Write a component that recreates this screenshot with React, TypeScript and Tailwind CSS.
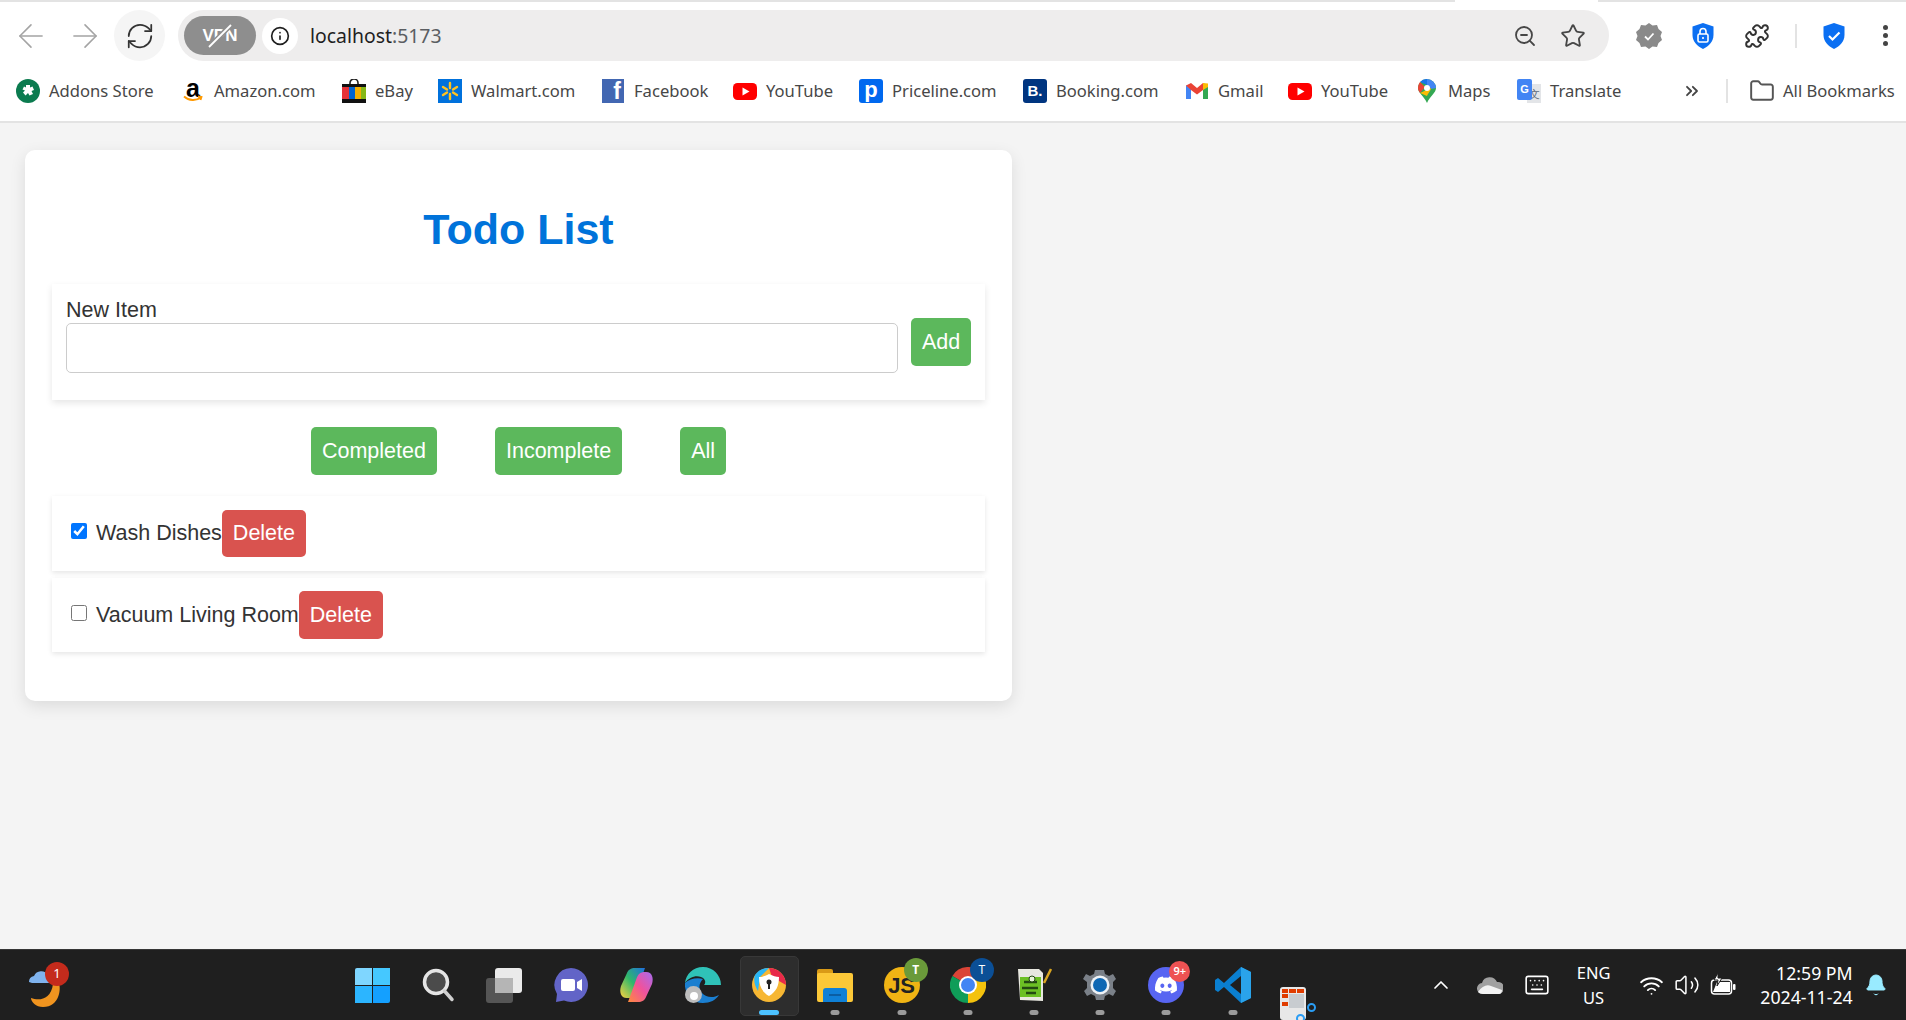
import { ArrowLeft, ArrowRight, Bell, ChevronUp, ChevronsRight, Folder, Info, Keyboard, Puzzle, RefreshCw, Star, Volume2, Wifi, ZoomOut } from 'lucide-react';
import { FaDiscord } from 'react-icons/fa';
import type { ReactNode } from 'react';

const YouTubeIcon = () => (
  <svg width="24" height="24" viewBox="0 0 24 24">
    <rect x="0" y="4" width="24" height="17" rx="4.5" fill="#f00" />
    <path d="M9.5 8.5v8l7-4z" fill="#fff" />
  </svg>
);

const Square = ({ className, children }: { className: string; children: ReactNode }) => (
  <span className={`w-6 h-6 flex items-center justify-center font-bold ${className}`}>{children}</span>
);

const bookmarks: { label: string; width: string; icon: ReactNode }[] = [
  {
    label: 'Addons Store',
    width: 'w-[165px]',
    icon: (
      <svg width="24" height="24" viewBox="0 0 24 24">
        <circle cx="12" cy="12" r="12" fill="#0b7b4f" />
        <path d="M10 6h4v2.5l2.5-1 1.5 3.5-2.5 1 1.5 3-3.5 1.5-1.5-2.5-2.5 2.5-2.500-3 2-2-2.500-1L8 7.500l2 1z" fill="#fff" />
      </svg>
    ),
  },
  {
    label: 'Amazon.com',
    width: 'w-[161px]',
    icon: (
      <span className="relative w-6 h-6 flex justify-center">
        <span className="font-['Liberation_Sans'] font-bold text-[25px] leading-[19px] text-black">a</span>
        <svg className="absolute left-[2px] bottom-0" width="20" height="8" viewBox="0 0 20 8" fill="none">
          <path d="M1 1.500c5 4.500 12 4.500 17 1M15 1.500l3.500.5-1 3" stroke="#f90" strokeWidth="1.800" />
        </svg>
      </span>
    ),
  },
  {
    label: 'eBay',
    width: 'w-[96px]',
    icon: (
      <svg width="24" height="24" viewBox="0 0 24 24">
        <path d="M8 6V4a4 4 0 0 1 8 0v2" stroke="#222" strokeWidth="1.600" fill="none" />
        <rect y="5" width="24" height="19" fill="#111" />
        <rect y="8" width="7" height="12" fill="#e53238" />
        <rect x="7" y="8" width="6" height="12" fill="#0064d2" />
        <rect x="13" y="8" width="6" height="12" fill="#f5af02" />
        <rect x="19" y="8" width="5" height="12" fill="#86b817" />
      </svg>
    ),
  },
  {
    label: 'Walmart.com',
    width: 'w-[163px]',
    icon: (
      <svg width="24" height="24" viewBox="0 0 24 24">
        <rect width="24" height="24" fill="#0071dc" />
        <g stroke="#ffc220" strokeWidth="2.400" strokeLinecap="round">
          <path d="M12 4v5M12 15v5M5 8l4 2.500M19 8l-4 2.500M5 16l4-2.500M19 16l-4-2.500" />
        </g>
      </svg>
    ),
  },
  {
    label: 'Facebook',
    width: 'w-[132px]',
    icon: (
      <span className="w-[22px] h-6 bg-[#4267b2] flex items-end justify-end pr-[3px] text-white font-['Liberation_Sans'] font-bold text-[23px] leading-[23px]">
        f
      </span>
    ),
  },
  { label: 'YouTube', width: 'w-[126px]', icon: <YouTubeIcon /> },
  {
    label: 'Priceline.com',
    width: 'w-[164px]',
    icon: <Square className="bg-[#0068ef] rounded-[3px] text-white text-[22px] leading-none pb-[2px] font-['Liberation_Sans']">p</Square>,
  },
  {
    label: 'Booking.com',
    width: 'w-[162px]',
    icon: <Square className="bg-[#003580] rounded-[3px] text-white text-[15px] leading-none font-['Liberation_Sans']">B.</Square>,
  },
  {
    label: 'Gmail',
    width: 'w-[103px]',
    icon: (
      <svg width="24" height="24" viewBox="0 0 24 24">
        <path d="M1 6v14h5V10z" fill="#4285f4" />
        <path d="M23 6v14h-5V10z" fill="#34a853" />
        <path d="M1 6.500 6 4l6 5 6-5 5 2.500L18 11l-6 4.500L6 11z" fill="#ea4335" />
        <path d="M18 4l5 .5V8l-5 3z" fill="#fbbc04" />
      </svg>
    ),
  },
  { label: 'YouTube', width: 'w-[127px]', icon: <YouTubeIcon /> },
  {
    label: 'Maps',
    width: 'w-[102px]',
    icon: (
      <svg width="24" height="24" viewBox="0 0 24 24">
        <path d="M12 0a9 9 0 0 1 9 9c0 5-6 8-9 15-3-7-9-10-9-15a9 9 0 0 1 9-9z" fill="#34a853" />
        <path d="M5 3a9 9 0 0 1 7-3v6z" fill="#1a73e8" />
        <path d="M12 0a9 9 0 0 1 9 9l-5 1-4-4z" fill="#4285f4" />
        <path d="M3 9c0-2.500 1-4.500 2-6l5 5-5 6c-1-1.500-2-3-2-5z" fill="#ea4335" />
        <path d="M5 14l11-5c0 3-3 5-4 8z" fill="#fbbc04" />
        <circle cx="12" cy="9" r="3" fill="#fff" />
      </svg>
    ),
  },
  {
    label: 'Translate',
    width: 'w-[165px]',
    icon: (
      <span className="relative w-6 h-6">
        <span className="absolute right-0 bottom-0 w-[14px] h-[19px] bg-[#e3e5e8] text-[#5f6b7a] text-[11px] leading-[19px] text-center">文</span>
        <span className="absolute left-0 top-0 w-[15px] h-[21px] bg-[#4285f4] rounded-[2px] text-white font-['Liberation_Sans'] font-bold text-[11px] leading-[20px] text-center">G</span>
      </span>
    ),
  },
];

const Shield = ({ color, children }: { color: string; children: ReactNode }) => (
  <svg width="24" height="26" viewBox="0 0 24 26">
    <path d="M12 0l10.500 3.500V12c0 6.500-4.500 11-10.500 14C6 23 1.500 18.500 1.500 12V3.500z" fill={color} />
    {children}
  </svg>
);

const Dot = ({ active }: { active?: boolean }) => (
  <span
    className={
      active
        ? 'absolute bottom-[6px] left-1/2 -translate-x-1/2 w-5 h-[5px] rounded-full bg-[#4cc2ff]'
        : 'absolute bottom-[6px] left-1/2 -translate-x-1/2 w-[9px] h-[5px] rounded-full bg-[#9b9b9b]'
    }
  />
);

const TaskIcon = ({ children, dot, active }: { children: ReactNode; dot?: boolean; active?: boolean }) => (
  <div className="relative w-[66.2px] h-[71px] shrink-0 flex items-center justify-center">
    {active && <span className="absolute left-[4px] top-[6px] w-[59px] h-[60px] rounded-[5px] bg-[#2d2d2d] border border-[#383838]" />}
    <span className="relative flex">{children}</span>
    {dot && <Dot active={active} />}
  </div>
);

const TinyBadge = ({ className, children }: { className: string; children: ReactNode }) => (
  <span className={`absolute rounded-full text-white flex items-center justify-center font-['Noto_Sans'] ${className}`}>{children}</span>
);

const Chrome = () => (
  <div className="font-['Noto_Sans'] bg-white shrink-0">
    <div className="flex h-[2px]">
      <div className="w-[1455px] bg-[#e3e3e3]" />
      <div className="w-[143px] bg-white" />
      <div className="flex-1 bg-[#e3e3e3]" />
    </div>
    <div className="flex items-center h-[63px] pt-[8px] pb-[4px] pl-[12px] [&>*]:shrink-0">
      <ArrowLeft size={38} strokeWidth={1} className="text-[#a4a4a4]" />
      <ArrowRight size={38} strokeWidth={1} className="text-[#a4a4a4] ml-[16px]" />
      <div className="ml-[10px] w-[51px] h-[51px] rounded-full bg-[#f5f5f5] flex items-center justify-center">
        <RefreshCw size={30} strokeWidth={1.4} className="text-[#333]" />
      </div>
      <div className="ml-[13px] w-[1431px] h-[51px] rounded-full bg-[#eeeded] flex items-center pl-[6px] pr-[23px]">
        <div className="relative w-[72px] h-[39px] rounded-full bg-[#8e8e8e] flex items-center justify-center text-white font-['Liberation_Sans'] font-bold text-[17px]">
          VPN
          <svg className="absolute left-[21px] top-[8px]" width="30" height="24" viewBox="0 0 30 24">
            <path d="M4 23 26 1" stroke="#8e8e8e" strokeWidth="5" />
            <path d="M4 23 26 1" stroke="#fff" strokeWidth="1.800" />
          </svg>
        </div>
        <div className="ml-[6px] w-[36px] h-[36px] rounded-full bg-white flex items-center justify-center">
          <Info size={20} strokeWidth={2} className="text-[#1f1f1f]" />
        </div>
        <div className="ml-[12px] text-[19.4px] text-[#1f1f1f]">
          localhost<span className="text-[#5b5e62]">:5173</span>
        </div>
        <ZoomOut size={24} strokeWidth={1.8} className="ml-auto text-[#474747]" />
        <Star size={26} strokeWidth={1.7} className="ml-[23px] text-[#474747]" />
      </div>
      <svg className="ml-[27px]" width="26" height="26" viewBox="0 0 26 26">
        <path d="M13 0l3.500 2.500 4.500-.5 1.500 4 3.500 3-1.500 4 1.500 4-3.500 3-1.500 4-4.500-.5L13 26l-3.500-2.500-4.500.5-1.500-4L0 17l1.500-4L0 9l3.500-3L5 2l4.500.5z" fill="#8a8a8a" />
        <path d="M9 13.500l3 3 5.500-6" stroke="#fff" strokeWidth="1.800" fill="none" />
      </svg>
      <span className="ml-[29px] flex">
        <Shield color="#0b6ff2">
          <rect x="7" y="11" width="10" height="8" rx="1.500" fill="none" stroke="#fff" strokeWidth="1.600" />
          <path d="M9 11V8.500a3 3 0 0 1 6 0V11" fill="none" stroke="#fff" strokeWidth="1.600" />
          <path d="M12 14v2" stroke="#fff" strokeWidth="1.600" />
        </Shield>
      </span>
      <Puzzle size={26} strokeWidth={1.8} className="ml-[29px] text-[#333]" />
      <div className="ml-[25px] w-[2px] h-[24px] bg-[#e3e3e3]" />
      <span className="ml-[25px] flex">
        <Shield color="#0b6ff2">
          <path d="M7 13l3.500 3.500L17.500 9.500" stroke="#fff" strokeWidth="2.200" fill="none" />
        </Shield>
      </span>
      <div className="ml-[37px] flex flex-col gap-[3px]">
        <span className="w-[5px] h-[5px] rounded-full bg-[#444]" />
        <span className="w-[5px] h-[5px] rounded-full bg-[#444]" />
        <span className="w-[5px] h-[5px] rounded-full bg-[#444]" />
      </div>
    </div>
    <div className="flex items-center h-[58px] pl-[16px] pb-[4px] text-[16.6px] text-[#474747] border-b-[2px] border-[#e3e3e3]">
      {bookmarks.map((b, i) => (
        <div key={i} className={`flex items-center shrink-0 ${b.width}`}>
          <span className="w-6 h-6 flex items-center justify-center shrink-0">{b.icon}</span>
          <span className="ml-[9px] whitespace-nowrap">{b.label}</span>
        </div>
      ))}
      <ChevronsRight size={20} strokeWidth={2.2} className="text-[#444] shrink-0" />
      <div className="ml-[24px] w-[2px] h-[24px] bg-[#e3e3e3] shrink-0" />
      <Folder size={26} strokeWidth={1.8} className="ml-[21px] text-[#555] shrink-0" />
      <span className="ml-[8px] whitespace-nowrap">All Bookmarks</span>
    </div>
  </div>
);

const Todo = () => (
  <div className="ml-[25px] mt-[27px] w-[987px] h-[551px] bg-white rounded-[10px] shadow-[0_5px_16px_rgba(0,0,0,0.1)] px-[27px] pt-[55px] font-['Liberation_Sans'] text-[21.5px] text-[#333]">
    <h1 className="text-center text-[43px] leading-[49px] font-bold text-[#0073da]">Todo List</h1>
    <div className="mt-[30px] h-[116px] flex items-start pl-[14px] bg-white shadow-[0_3px_7px_rgba(0,0,0,0.1)]">
      <div className="pt-[14px]">
        <label className="block leading-[25px]">New Item</label>
        <input className="block w-[832px] h-[50px] border border-[#ccc] rounded-[5px] bg-white outline-none" />
      </div>
      <button className="mt-[34px] ml-[13px] h-[48px] px-[11px] rounded-[5px] bg-[#5cb85c] text-white">Add</button>
    </div>
    <div className="mt-[27px] flex justify-center gap-[58px]">
      <button className="h-[48px] px-[11px] rounded-[5px] bg-[#5cb85c] text-white">Completed</button>
      <button className="h-[48px] px-[11px] rounded-[5px] bg-[#5cb85c] text-white">Incomplete</button>
      <button className="h-[48px] px-[11px] rounded-[5px] bg-[#5cb85c] text-white">All</button>
    </div>
    <div className="mt-[21px] h-[75px] flex items-center pl-[19px] bg-white shadow-[0_2px_5px_rgba(0,0,0,0.1)]">
      <input type="checkbox" defaultChecked className="w-4 h-4 mb-[5px] accent-[#0075ff]" />
      <span className="ml-[9px]">Wash Dishes</span>
      <button className="h-[47px] px-[11px] rounded-[5px] bg-[#d9534f] text-white mb-[1px]">Delete</button>
    </div>
    <div className="mt-[7px] h-[74px] flex items-center pl-[19px] bg-white shadow-[0_2px_5px_rgba(0,0,0,0.1)]">
      <input type="checkbox" className="w-4 h-4 mb-[5px] accent-[#0075ff]" />
      <span className="ml-[9px]">Vacuum Living Room</span>
      <button className="h-[48px] px-[11px] rounded-[5px] bg-[#d9534f] text-white">Delete</button>
    </div>
  </div>
);

const Taskbar = () => (
  <div className="h-[71px] shrink-0 bg-[#1f1f1f] border-t border-[#363636] flex items-center overflow-hidden font-['Noto_Sans'] text-white">
    <div className="w-[339px] shrink-0 pl-[28px]">
      <div className="relative w-[40px] h-[46px]">
        <svg width="40" height="46" viewBox="0 0 40 46">
          <path d="M31 22c2 4 1 23-16 23C8 45 3 40 3 36c8 3 20 2 22-14z" fill="#f0941f" />
          <path d="M1 20a6 6 0 0 1 5-6 8 8 0 0 1 14-1c4 0 6 3 6 8H4z" fill="#7fb3ee" />
        </svg>
        <TinyBadge className="left-[17px] top-0 w-6 h-6 bg-[#c42b1c] text-[13px]">1</TinyBadge>
      </div>
    </div>
    <div className="flex shrink-0">
      <TaskIcon>
        <div className="grid grid-cols-2 gap-[1px] w-[35px] h-[35px]">
          <span className="bg-[#7fd6ff] rounded-tl-[2px]" />
          <span className="bg-[#45c8ff]" />
          <span className="bg-[#2cb5ff]" />
          <span className="bg-[#14a0ff] rounded-br-[2px]" />
        </div>
      </TaskIcon>
      <TaskIcon>
        <svg width="33" height="34" viewBox="0 0 33 34">
          <circle cx="14" cy="14" r="11.500" fill="#4b4b4b" stroke="#e5e5e5" strokeWidth="3.500" />
          <path d="M22.500 23 30 31.500" stroke="#d0d0d0" strokeWidth="3.500" strokeLinecap="round" />
        </svg>
      </TaskIcon>
      <TaskIcon>
        <span className="relative w-[36px] h-[35px]">
          <span className="absolute left-0 bottom-0 w-[27px] h-[25px] rounded-[3px] bg-[#555]" />
          <span className="absolute right-0 top-0 w-[27px] h-[25px] rounded-[3px] bg-[#eaeaea]" />
          <span className="absolute left-[9px] top-[10px] w-[18px] h-[15px] bg-[#b5b5b5]" />
        </span>
      </TaskIcon>
      <TaskIcon>
        <svg width="34" height="34" viewBox="0 0 34 34">
          <path d="M17 0a17 17 0 1 1-7 32.500L2 34l1-8A17 17 0 0 1 17 0z" fill="#6264c7" />
          <rect x="7" y="11" width="14" height="12" rx="2" fill="#fff" />
          <path d="M23 14l5-3v12l-5-3z" fill="#fff" />
        </svg>
      </TaskIcon>
      <TaskIcon>
        <svg width="35" height="34" viewBox="0 0 35 34">
          <path d="M9 30C2 31 0 24 2 18L8 5c1-3 4-5 8-5h10l-8 22c-2 6-4 8-9 8z" fill="url(#cp1)" />
          <path d="M26 4c7-1 9 6 7 12l-6 13c-1 3-4 5-8 5H9l8-22c2-6 4-8 9-8z" fill="url(#cp2)" />
          <defs>
            <linearGradient id="cp1" x1="0" y1="1" x2="1" y2="0">
              <stop offset="0" stopColor="#ffd23f" />
              <stop offset="0.5" stopColor="#30b86a" />
              <stop offset="1" stopColor="#1e6fe0" />
            </linearGradient>
            <linearGradient id="cp2" x1="0" y1="1" x2="1" y2="0">
              <stop offset="0" stopColor="#ff8a3d" />
              <stop offset="0.5" stopColor="#f0529c" />
              <stop offset="1" stopColor="#a56cf0" />
            </linearGradient>
          </defs>
        </svg>
      </TaskIcon>
      <TaskIcon>
        <span className="relative w-[36px] h-[36px]">
          <svg width="36" height="36" viewBox="0 0 36 36">
            <path d="M18 0C8 0 1 7 0 16c4-6 11-8 16-6 5 2 5 6 3 8h17c0-10-8-18-18-18z" fill="#2fc2b8" />
            <path d="M0 16c-1 10 7 20 18 20 7 0 13-3 16-8-5 3-13 3-17-2-4-4-3-10 1-14-6-2-14 0-18 4z" fill="#1b7fd0" />
          </svg>
          <span className="absolute left-0 bottom-0 w-[17px] h-[17px] rounded-full bg-[#bdbdbd] flex items-end justify-center overflow-hidden">
            <span className="w-[8px] h-[8px] rounded-full bg-white mb-[3px]" />
          </span>
        </span>
      </TaskIcon>
      <TaskIcon dot active>
        <svg width="34" height="36" viewBox="0 0 34 36">
          <circle cx="17" cy="18" r="17" fill="#f7b733" />
          <path d="M17 1a17 17 0 0 1 17 17L20 10z" fill="#e8294a" />
          <path d="M3 8a17 17 0 0 1 14-7L8 10l-2 14c-3-5-5-11-3-16z" fill="#29b6f6" />
          <path d="M17 7c4 2 7 3 10 3 0 9-3 15-10 19C10 25 7 19 7 10c3 0 6-1 10-3z" fill="#fff" />
          <circle cx="17" cy="15" r="2.500" fill="#222" />
          <rect x="16" y="16" width="2" height="6" fill="#222" />
        </svg>
      </TaskIcon>
      <TaskIcon dot>
        <span className="relative w-[36px] h-[33px]">
          <span className="absolute left-0 top-0 w-[16px] h-[8px] rounded-t-[2px] bg-[#d99a17]" />
          <span className="absolute left-0 top-[4px] w-[36px] h-[29px] rounded-[2px] bg-[#fcc838]" />
          <span className="absolute left-[6px] bottom-0 w-[24px] h-[14px] rounded-t-[3px] bg-[#0f80d7] flex items-center justify-center">
            <span className="w-[12px] h-[2px] bg-[#0b5ea3]" />
          </span>
        </span>
      </TaskIcon>
      <TaskIcon dot>
        <span className="relative w-[36px] h-[36px] rounded-full bg-[#f0b414] flex items-center justify-center font-['Liberation_Sans'] font-bold text-[22px] text-[#222]">
          JS
          <TinyBadge className="left-[20px] top-[-9px] w-6 h-6 bg-[#6a9a3a] text-[12px] text-[#d8e8c8]">T</TinyBadge>
        </span>
      </TaskIcon>
      <TaskIcon dot>
        <span className="relative w-[36px] h-[36px]">
          <svg width="36" height="36" viewBox="0 0 36 36">
            <path d="M18 18 2.400 9A18 18 0 0 1 33.600 9z" fill="#db4437" />
            <path d="M18 18 33.600 9A18 18 0 0 1 18 36z" fill="#f4c20d" />
            <path d="M18 18 18 36A18 18 0 0 1 2.400 9z" fill="#0f9d58" />
            <circle cx="18" cy="18" r="9" fill="#fff" />
            <circle cx="18" cy="18" r="7" fill="#4285f4" />
          </svg>
          <TinyBadge className="left-[20px] top-[-9px] w-6 h-6 bg-[#0b4f96] text-[12px]">T</TinyBadge>
        </span>
      </TaskIcon>
      <TaskIcon dot>
        <svg width="36" height="34" viewBox="0 0 36 34">
          <path d="M2 1h21l4 4v28l-23-1z" fill="#e8e8e0" />
          <rect x="4" y="9" width="21" height="20" fill="#6cc024" />
          <path d="M8 14h13M6 20h16M10 25h10" stroke="#234a12" strokeWidth="2.500" />
          <circle cx="16" cy="11" r="3" fill="#e8f5d8" stroke="#234a12" />
          <path d="M28 15 35 1" stroke="#d9a520" strokeWidth="2.500" />
        </svg>
      </TaskIcon>
      <TaskIcon dot>
        <span className="relative flex">
          <svg width="36" height="36" viewBox="0 0 36 36">
            <path d="M18 3l4 0 1 4 4 2 4-2 3 5-3 3v6l3 3-3 5-4-2-4 2-1 4h-8l-1-4-4-2-4 2-3-5 3-3v-6L1 12l3-5 4 2 4-2 1-4z" fill="#7a8088" />
            <circle cx="18" cy="18" r="9.500" fill="#eef2f6" />
            <circle cx="18" cy="18" r="7" fill="#0f68b4" />
          </svg>
        </span>
      </TaskIcon>
      <TaskIcon dot>
        <span className="relative w-[36px] h-[36px] rounded-full bg-[#5865f2] flex items-center justify-center">
          <FaDiscord size={24} className="text-white" />
          <TinyBadge className="left-[21px] top-[-6px] w-[21px] h-[21px] bg-[#ee5253] text-[11px] font-semibold">9+</TinyBadge>
        </span>
      </TaskIcon>
      <TaskIcon dot>
        <svg width="36" height="36" viewBox="0 0 36 36">
          <path d="M26 0 36 5v26l-10 5L9 20l-6 5-3-2v-10l3-2 6 5z" fill="#0a7fd0" />
          <path d="M26 9 15 18l11 9z" fill="#1f1f1f" />
          <path d="M26 0 36 5v26l-10 5z" fill="#2aa3ea" />
        </svg>
      </TaskIcon>
    </div>
    <div className="ml-[14px] self-end shrink-0 w-[36px] h-[33px] relative">
      <div className="absolute left-0 top-0 w-[26px] h-[33px] rounded-[3px] bg-[#e8e8e8] grid grid-cols-3 gap-[1px] p-[2px] content-start">
        <span className="h-[4px] bg-[#e03c00]" />
        <span className="h-[4px] bg-[#e03c00]" />
        <span className="h-[4px] bg-[#e03c00]" />
        <span className="h-[4px] bg-[#e03c00]" />
        <span className="col-span-2 row-span-2 h-[14px] bg-[#c8ccd0]" />
        <span className="h-[4px] bg-[#e03c00]" />
      </div>
      <span className="absolute left-[27px] top-[16px] w-[9px] h-[9px] rounded-full border-2 border-[#2a9df4]" />
      <span className="absolute left-[16px] top-[27px] w-[9px] h-[9px] rounded-full border-2 border-[#2a9df4]" />
    </div>
    <ChevronUp size={24} strokeWidth={1.7} className="ml-[113px] shrink-0" />
    <svg className="ml-[24px] shrink-0" width="26" height="18" viewBox="0 0 26 18">
      <path d="M6 18a5.500 5.500 0 0 1-1-11 8 8 0 0 1 15-1 6 6 0 0 1 2 12z" fill="#a0a0a0" />
      <path d="M1 16c4-6 9-8 13-6l11 4c0 2-1 4-3 4H6c-2 0-4-1-5-2z" fill="#f2f2f2" />
    </svg>
    <Keyboard size={26} strokeWidth={1.5} className="ml-[21px] shrink-0" />
    <div className="ml-[25px] w-[38px] text-center text-[16.5px] leading-[25px] shrink-0">
      <div>ENG</div>
      <div>US</div>
    </div>
    <Wifi size={25} strokeWidth={1.8} className="ml-[26px] shrink-0" />
    <Volume2 size={26} strokeWidth={1.4} className="ml-[10px] shrink-0" />
    <svg className="ml-[10px] shrink-0" width="26" height="24" viewBox="0 0 26 24" fill="none">
      <rect x="1.500" y="7" width="20" height="14" rx="3" stroke="#fff" strokeWidth="1.500" />
      <path d="M3 19l4-10h13v10z" fill="#fff" />
      <rect x="23" y="11" width="2.500" height="6" rx="1" fill="#fff" />
      <path d="M8 0 4 7h4l-1 6 5-8H8z" fill="#fff" stroke="#1f1f1f" />
    </svg>
    <div className="ml-[6px] w-[111px] text-right text-[17.7px] leading-[24px] shrink-0">
      <div>12:59 PM</div>
      <div>2024-11-24</div>
    </div>
    <Bell size={24} fill="#99ebff" strokeWidth={1} className="ml-[11px] text-[#99ebff] shrink-0" />
  </div>
);

export default function App() {
  return (
    <div className="h-[1020px] w-[1906px] flex flex-col overflow-hidden bg-[#f4f4f4]">
      <Chrome />
      <div className="flex-1">
        <Todo />
      </div>
      <Taskbar />
    </div>
  );
}
